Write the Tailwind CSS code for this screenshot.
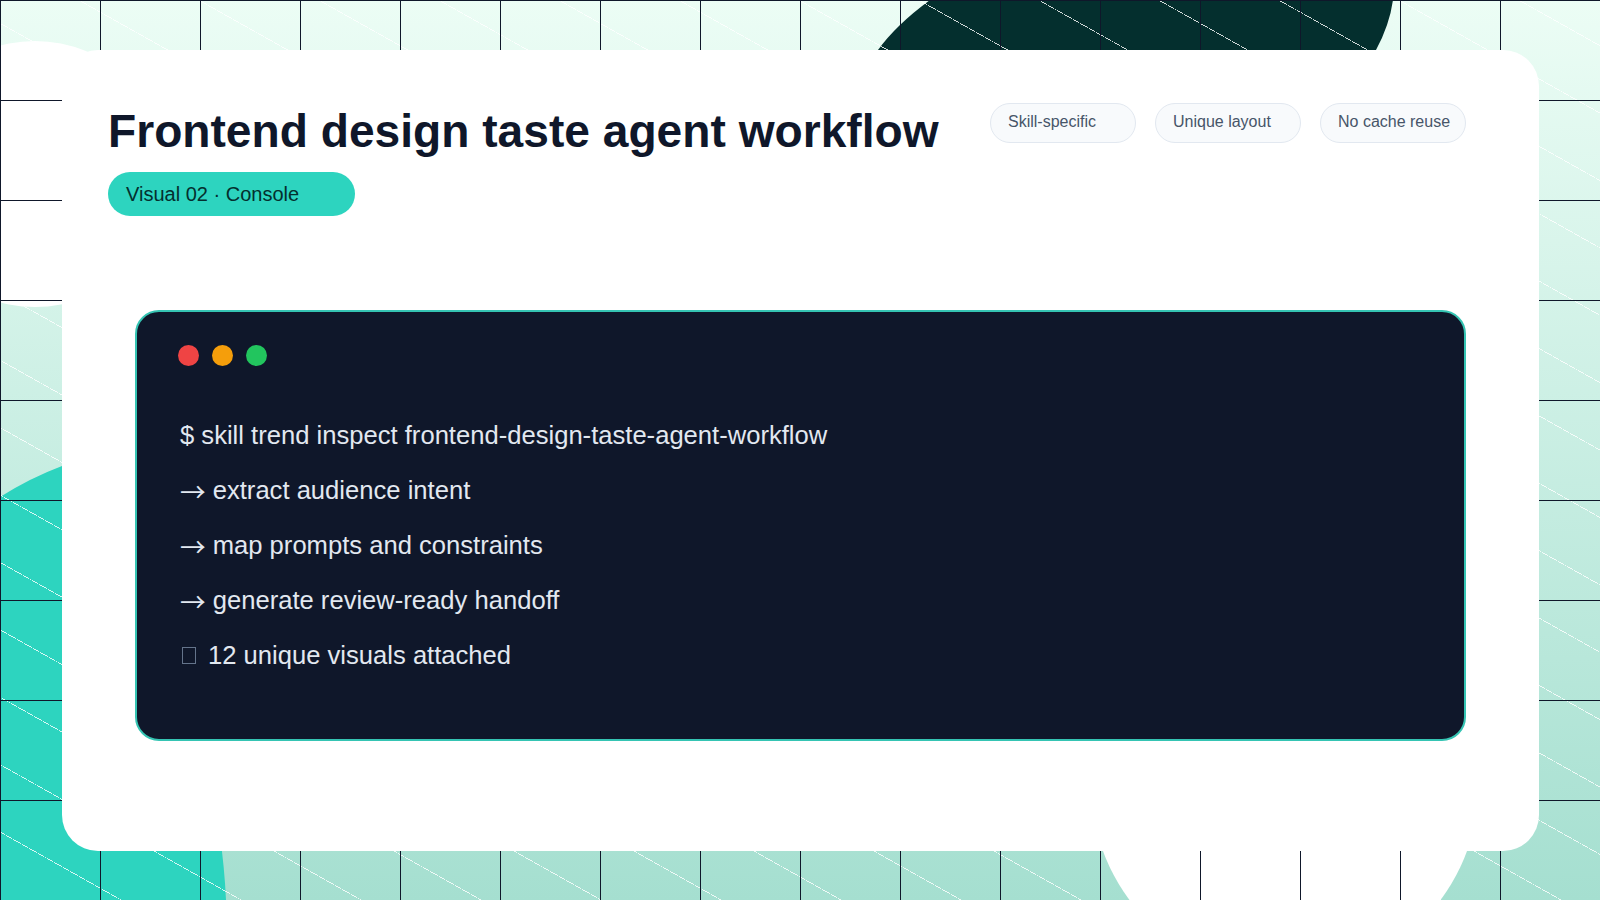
<!DOCTYPE html>
<html lang="en">
<head>
  <meta charset="UTF-8">
  <title>Frontend design taste agent workflow</title>
  <script src="https://cdn.jsdelivr.net/npm/@tailwindcss/browser@4"></script>
</head>
<body class="relative h-[900px] w-[1600px] overflow-hidden bg-[linear-gradient(180deg,#ecfdf5,#a5dfd0)] font-['Liberation_Sans',Arial,sans-serif]">

  <!-- Backdrop: blobs, then stripes and grid on top of them -->
  <svg class="absolute inset-0" width="1600" height="900" viewBox="0 0 1600 900" aria-hidden="true">
    <path fill="#042f2e" d="M930 0 Q896 25 878 50 L870 70 L1370 70 L1376 50 Q1389.5 25 1393 0 Z"/>
    <path fill="#2dd4bf" d="M0 497 Q30 478 62 466 L100 440 L190 700 Q222 810 226 900 L0 900 Z"/>
    <circle fill="#ffffff" cx="35" cy="174" r="133"/>
    <circle fill="#ffffff" cx="1285" cy="784" r="194"/>
  </svg>
  <div class="absolute inset-0 bg-[repeating-linear-gradient(29.32deg,transparent_0_0.2px,#ffffffd0_0.2px_0.95px,transparent_0.95px_58.76px)]"></div>
  <div class="absolute inset-0 bg-[linear-gradient(#0f172a_1px,transparent_1px),linear-gradient(90deg,#0f172a_1px,transparent_1px)] bg-[size:100px_100px]"></div>

  <main class="relative mt-[50px] mr-[61px] ml-[62px] h-[801px] rounded-[36px] bg-white px-[46px] pt-[53px]">
    <div class="flex items-start justify-between pr-[27px]">
      <h1 class="text-[46.15px] leading-[56px] font-bold text-[#0f172a]">Frontend design taste agent workflow</h1>
      <div class="flex gap-[19px]">
        <span class="h-[40px] w-[146px] rounded-[20px] border border-[#e2e8f0] bg-[#f8fafc] pl-[17px] text-[16px] leading-[36px] text-[#475569]">Skill-specific</span>
        <span class="h-[40px] w-[146px] rounded-[20px] border border-[#e2e8f0] bg-[#f8fafc] pl-[17px] text-[16px] leading-[36px] text-[#475569]">Unique layout</span>
        <span class="h-[40px] w-[146px] rounded-[20px] border border-[#e2e8f0] bg-[#f8fafc] pl-[17px] text-[16px] leading-[36px] text-[#475569]">No cache reuse</span>
      </div>
    </div>
    <div class="mt-[13px] h-[44px] w-[247px] rounded-[22px] bg-[#2dd4bf] pl-[18px] text-[20px] leading-[44px] text-[#042f2e]">Visual 02 · Console</div>

    <section class="mt-[94px] ml-[27px] h-[431px] w-[1331px] rounded-[24px] border-2 border-[#35c4b3] bg-[#0f172a] pt-[33px] pl-[41px]">
      <div class="flex gap-[13px]">
        <i class="size-[21px] rounded-full bg-[#ef4444]"></i>
        <i class="size-[21px] rounded-full bg-[#f59e0b]"></i>
        <i class="size-[21px] rounded-full bg-[#22c55e]"></i>
      </div>
      <ul class="mt-[42px] pl-[2px] text-[25.6px] leading-[55px] text-[#e2e8f0]">
        <li>$ skill trend inspect frontend-design-taste-agent-workflow</li>
        <li><span class="align-[-3px] font-['Noto_Sans_CJK_SC'] leading-none">→</span> extract audience intent</li>
        <li><span class="align-[-3px] font-['Noto_Sans_CJK_SC'] leading-none">→</span> map prompts and constraints</li>
        <li><span class="align-[-3px] font-['Noto_Sans_CJK_SC'] leading-none">→</span> generate review-ready handoff</li>
        <li class="flex items-center"><span class="mr-[12px] ml-[2px] h-[17px] w-[14px] border border-[#64748b]"></span>12 unique visuals attached</li>
      </ul>
    </section>
  </main>
</body>
</html>
